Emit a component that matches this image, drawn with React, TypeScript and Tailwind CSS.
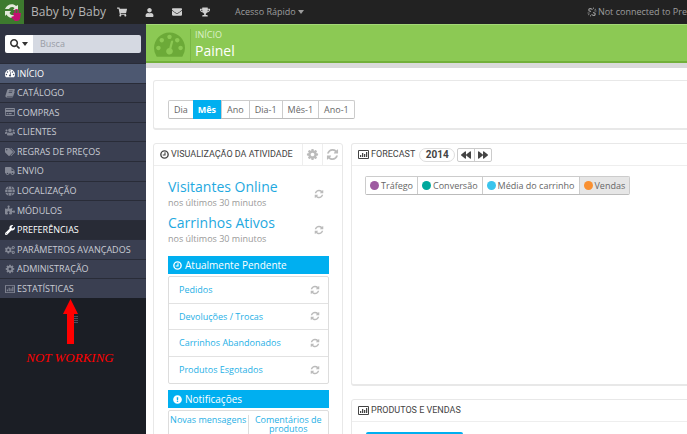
import React from 'react';
import {
  FaBackward,
  FaCogs,
  FaEnvelope,
  FaExclamationCircle,
  FaForward,
  FaGlobe,
  FaPuzzlePiece,
  FaRegCreditCard,
  FaSearch,
  FaShoppingCart,
  FaTags,
  FaTrophy,
  FaTruck,
  FaUser,
  FaUsers,
  FaWrench,
} from 'react-icons/fa';

type IconProps = { className?: string };

function GaugeIcon({ className }: IconProps) {
  return (
    <svg viewBox="0 0 1792 1792" fill="currentColor" className={className} aria-hidden="true">
      <path d="M384 1152q0-53-37.5-90.5t-90.5-37.5-90.5 37.5-37.5 90.5 37.5 90.5 90.5 37.5 90.5-37.5 37.5-90.5zm192-448q0-53-37.5-90.5t-90.5-37.5-90.5 37.5-37.5 90.5 37.5 90.5 90.5 37.5 90.5-37.5 37.5-90.5zm428 481l101-382q6-26-7.5-48.5t-38.5-29.5-48 6.5-30 39.5l-101 382q-60 5-107 43.5t-63 98.5q-20 77 20 146t117 89 146-20 89-117q16-60-6-117t-72-91zm660-33q0-53-37.5-90.5t-90.5-37.5-90.5 37.5-37.5 90.5 37.5 90.5 90.5 37.5 90.5-37.5 37.5-90.5zm-640-640q0-53-37.5-90.5t-90.5-37.5-90.5 37.5-37.5 90.5 37.5 90.5 90.5 37.5 90.5-37.5 37.5-90.5zm448 192q0-53-37.5-90.5t-90.5-37.5-90.5 37.5-37.5 90.5 37.5 90.5 90.5 37.5 90.5-37.5 37.5-90.5zm320 448q0 261-141 483-19 29-54 29h-1402q-35 0-54-29-141-221-141-483 0-182 71-348t191-286 286-191 348-71 348 71 286 191 191 286 71 348z" />
    </svg>
  );
}

function RefreshIcon({ className }: IconProps) {
  return (
    <svg viewBox="0 0 1792 1792" fill="currentColor" className={className} aria-hidden="true">
      <path d="M1639 1056q0 5-1 7-64 268-268 434.5t-478 166.5q-146 0-282.5-55t-243.5-157l-129 129q-19 19-45 19t-45-19-19-45v-448q0-26 19-45t45-19h448q26 0 45 19t19 45-19 45l-137 137q71 66 161 102t187 36q134 0 250-65t186-179q11-17 53-117 8-23 30-23h192q13 0 22.5 9.5t9.5 22.5zm25-800v448q0 26-19 45t-45 19h-448q-26 0-45-19t-19-45 19-45l138-138q-148-137-349-137-134 0-250 65t-186 179q-11 17-53 117-8 23-30 23h-199q-13 0-22.5-9.5t-9.5-22.5v-7q65-268 270-434.5t480-166.5q146 0 284 55.5t245 156.5l130-129q19-19 45-19t45 19 19 45z" />
    </svg>
  );
}

function GearIcon({ className }: IconProps) {
  return (
    <svg viewBox="0 0 1792 1792" fill="currentColor" className={className} aria-hidden="true">
      <path d="M1152 896q0-106-75-181t-181-75-181 75-75 181 75 181 181 75 181-75 75-181zm512-109v222q0 12-8 23t-20 13l-185 28q-19 54-39 91 35 50 107 138 10 12 10 25t-9 23q-27 37-99 108t-94 71q-12 0-26-9l-138-108q-44 23-91 38-16 136-29 186-7 28-36 28h-222q-14 0-24.5-8.5t-11.5-21.5l-28-184q-49-16-90-37l-141 107q-10 9-25 9-14 0-25-11-126-114-165-168-7-10-7-23 0-12 8-23 15-21 51-66.5t54-70.5q-27-50-41-99l-183-27q-13-2-21-12.5t-8-23.5v-222q0-12 8-23t19-13l186-28q14-46 39-92-40-57-107-138-10-12-10-24 0-10 9-23 26-36 98.5-107.5t94.5-71.5q13 0 26 10l138 107q44-23 91-38 16-136 29-186 7-28 36-28h222q14 0 24.5 8.5t11.5 21.5l28 184q49 16 90 37l142-107q9-9 24-9 13 0 25 10 129 119 165 170 7 8 7 22 0 12-8 23-15 21-51 66.5t-54 70.5q26 50 41 98l183 28q13 2 21 12.5t8 23.5z" />
    </svg>
  );
}

function ChartIcon({ className }: IconProps) {
  return (
    <svg viewBox="0 0 22 18" fill="currentColor" className={className} aria-hidden="true">
      <path fillRule="evenodd" d="M2 0h18a2 2 0 0 1 2 2v14a2 2 0 0 1-2 2H2a2 2 0 0 1-2-2V2a2 2 0 0 1 2-2zm0 2v14h18V2z" />
      <path d="M4 10h2.500v4H4zM8 6h2.500v8H8zM12 8h2.500v6H12zM16 4h2.500v10H16z" />
    </svg>
  );
}

function ClockIcon({ className }: IconProps) {
  return (
    <svg viewBox="0 0 18 18" fill="none" stroke="currentColor" className={className} aria-hidden="true">
      <circle cx="9" cy="9" r="7.300" strokeWidth="2.800" />
      <path d="M10 4.500V10H5.500" strokeWidth="2.200" />
    </svg>
  );
}

function BookIcon({ className }: IconProps) {
  return (
    <svg viewBox="0 0 20 20" fill="currentColor" className={className} aria-hidden="true">
      <path fillRule="evenodd" d="M7 2h11a1.500 1.500 0 0 1 1.500 2L16 15a2 2 0 0 1-2 1.500H4.500c-1 0-1 1 0 1H15l3.500-10 .9.500L16 17.500a2 2 0 0 1-2 1.500H4a3 3 0 0 1-3-4L4.500 4A3 3 0 0 1 7 2zm1.500 3L8 6.500h7l.5-1.500zM7.500 8 7 9.500h7l.5-1.500z" />
    </svg>
  );
}

function CaretIcon({ className }: IconProps) {
  return (
    <svg viewBox="0 0 6 4" fill="currentColor" className={className} aria-hidden="true">
      <path d="M0 0h6L3 4z" />
    </svg>
  );
}

function UnlinkIcon({ className }: IconProps) {
  return (
    <svg viewBox="0 0 20 20" fill="none" stroke="currentColor" strokeWidth="2.200" className={className} aria-hidden="true">
      <path d="M8 9 4 7.500A3 3 0 0 1 7 3l4 2M12 11l4 1.500A3 3 0 0 1 13 17l-4-2" />
      <path d="M13 1v3M15 6l3-2M15 8h4M7 19v-3M5 14l-3 2M5 12H1" strokeWidth="1.500" />
    </svg>
  );
}

function Logo() {
  return (
    <svg viewBox="0 0 24 24" className="h-6 w-6 shrink-0 bg-[#3d7a2e]" aria-hidden="true">
      <path d="M5 9c2-5 8-6 11-3l2-1v5h-5l1.500-2c-2-2-4.500-1-5.500 1z" fill="#e3eadb" />
      <path d="M5 11h6l-1.500 2c1 2 3 2.500 5 2l1 2.500c-4 1.500-7.500 0-9-3L5 16z" fill="#e3eadb" />
      <path d="M13 13h8l-1 6q-1 2-3 2h-2l-4-4 3-1z" fill="#c40f72" />
      <path d="M15 13v-2a1.500 1.500 0 0 1 3 0v2" fill="none" stroke="#c40f72" strokeWidth="1.200" />
    </svg>
  );
}

const menu = [
  { label: 'INÍCIO', icon: GaugeIcon, state: 'current' },
  { label: 'CATÁLOGO', icon: BookIcon },
  { label: 'COMPRAS', icon: FaRegCreditCard },
  { label: 'CLIENTES', icon: FaUsers },
  { label: 'REGRAS DE PREÇOS', icon: FaTags },
  { label: 'ENVIO', icon: FaTruck },
  { label: 'LOCALIZAÇÃO', icon: FaGlobe },
  { label: 'MÓDULOS', icon: FaPuzzlePiece },
  { label: 'PREFERÊNCIAS', icon: FaWrench, state: 'hover' },
  { label: 'PARÂMETROS AVANÇADOS', icon: FaCogs },
  { label: 'ADMINISTRAÇÃO', icon: GearIcon },
  { label: 'ESTATÍSTICAS', icon: ChartIcon },
];

const periods = ['Dia', 'Mês', 'Ano', 'Dia-1', 'Mês-1', 'Ano-1'];

const pending = ['Pedidos', 'Devoluções / Trocas', 'Carrinhos Abandonados', 'Produtos Esgotados'];

const series = [
  { label: 'Tráfego', dot: 'bg-[#9e5ba1]' },
  { label: 'Conversão', dot: 'bg-[#00a89c]' },
  { label: 'Média do carrinho', dot: 'bg-[#3ac4ed]' },
  { label: 'Vendas', dot: 'bg-[#f99031]', active: true },
];

function menuStyle(state?: string) {
  if (state === 'current') return 'bg-[#4d5871] text-white';
  if (state === 'hover') return 'bg-[#282b36] text-white';
  return 'bg-[#3a3f51] text-[#c9ccd4]';
}

function TopBar() {
  return (
    <header className="flex h-6 shrink-0 items-center overflow-hidden bg-[#222] text-[#9d9d9d]">
      <Logo />
      <a href="#" className="ml-[7px] w-[79px] whitespace-nowrap text-[12px] leading-6 text-[#b5b5b5]">
        Baby by Baby
      </a>
      <nav className="flex items-center gap-[18px] pl-[7px] text-[#d0d0d0]">
        <a href="#" aria-label="Pedidos"><FaShoppingCart className="size-[10px]" /></a>
        <a href="#" aria-label="Clientes"><FaUser className="size-[9px]" /></a>
        <a href="#" aria-label="Mensagens"><FaEnvelope className="size-[10px]" /></a>
        <a href="#" aria-label="Troféus"><FaTrophy className="size-[10px]" /></a>
      </nav>
      <button className="ml-[25px] flex items-center gap-[2px] whitespace-nowrap text-[9px]">
        Acesso Rápido
        <CaretIcon className="h-1 w-[6px]" />
      </button>
      <a href="#" className="ml-auto flex shrink-0 items-center gap-px whitespace-nowrap text-[9px]">
        <UnlinkIcon className="size-[10px] shrink-0" />
        Not connected to Pre
      </a>
    </header>
  );
}

function Sidebar() {
  return (
    <aside className="relative w-[146px] shrink-0 bg-[#1b1e25]">
      <form className="flex h-[39px] items-center bg-[#2f3342] px-[5px]">
        <button type="button" aria-label="Filtro" className="flex h-[18px] w-7 items-center justify-center gap-[2px] rounded-l-[2px] bg-white text-[#333]">
          <FaSearch className="size-[10px]" />
          <CaretIcon className="h-1 w-[6px]" />
        </button>
        <input
          type="text"
          aria-label="Busca"
          placeholder="Busca"
          className="h-[18px] min-w-0 flex-1 rounded-r-[2px] bg-[#d5d9e2] px-[7px] text-[9px] placeholder:text-[#999da6]"
        />
      </form>
      <ul className="grid h-[235px] auto-rows-fr">
        {menu.map(({ label, icon: Icon, state }) => (
          <li key={label}>
            <a
              href="#"
              className={`flex h-full items-center gap-[2px] border-t border-[#292c38] pl-[5px] text-[9px] font-medium whitespace-nowrap ${menuStyle(state)}`}
            >
              <Icon className={state ? 'size-[10px] shrink-0' : 'size-[10px] shrink-0 text-[#858996]'} />
              {label}
            </a>
          </li>
        ))}
      </ul>
      <div className="mt-[18px] ml-[73px] grid w-[5px] gap-px" aria-hidden="true">
        <i className="h-px bg-[#4b505e]" />
        <i className="h-px bg-[#4b505e]" />
        <i className="h-px bg-[#4b505e]" />
        <i className="h-px bg-[#4b505e]" />
      </div>

      {/* red note on top of the sidebar */}
      <div className="absolute top-[275px] left-[26px] flex w-[88px] flex-col items-center text-[#f00]">
        <svg viewBox="0 0 15 45" className="h-[45px] w-[15px]" fill="currentColor" aria-hidden="true">
          <path d="M7.500 0 15 15h-4v30H4V15H0z" />
        </svg>
        <span className="mt-[6px] font-['Liberation_Serif',serif] text-[13px] leading-4 whitespace-nowrap italic">
          NOT WORKING
        </span>
      </div>
    </aside>
  );
}

function PageHead() {
  return (
    <div className="border-b-[5px] border-[#dadada]">
      <div className="flex h-[39px] items-end border-t border-b-2 border-t-[#a5d878] border-b-[#72b03a] bg-[#8cc954] pl-2 text-white">
        <GaugeIcon className="size-[31px] self-center text-[#6caa38]" />
        <div className="ml-[5px] border-l border-[#79b745] pl-1">
          <p className="text-[9px] leading-[12px] text-[#dcf0c8]">INÍCIO</p>
          <h1 className="text-[14px] leading-[20px]">Painel</h1>
        </div>
      </div>
    </div>
  );
}

const panel = 'rounded-[3px] border border-[#e8e8e8] bg-white';
const heading = "flex items-center gap-[2px] whitespace-nowrap font-['Roboto',sans-serif] text-[9px] text-[#444]";
const bar = 'flex h-[18px] items-center gap-[3px] bg-[#00aff0] pl-[5px] text-[10px] font-medium text-white';

function ActivityPanel() {
  return (
    <section className={`w-[190px] shrink-0 ${panel}`}>
      <div className="flex h-[22px] border-b border-[#eee] pl-[6px]">
        <h2 className={heading}>
          <ClockIcon className="size-[9px]" />
          VISUALIZAÇÃO DA ATIVIDADE
        </h2>
        <div className="ml-auto flex text-[#bbb]">
          <button aria-label="Configurar" className="flex w-5 items-center justify-center border-l border-[#eee]">
            <GearIcon className="size-[13px]" />
          </button>
          <button aria-label="Atualizar" className="flex w-5 items-center justify-center border-l border-[#eee]">
            <RefreshIcon className="size-[13px]" />
          </button>
        </div>
      </div>

      <div className="pt-[10px] pr-[13px] pl-[14px]">
        {['Visitantes Online', 'Carrinhos Ativos'].map((title) => (
          <div key={title} className="flex h-9 items-center justify-between pr-[5px]">
            <div>
              <a href="#" className="block text-[14px] leading-[18px] text-[#1fa9e0]">{title}</a>
              <p className="text-[9px] leading-[14px] text-[#999]">nos últimos 30 minutos</p>
            </div>
            <RefreshIcon className="size-[10px] text-[#bbb]" />
          </div>
        ))}

        <h3 className={`mt-2 ${bar}`}>
          <ClockIcon className="size-[9px]" />
          Atualmente Pendente
        </h3>
        <ul className="mt-[2px] grid h-[108px] auto-rows-fr rounded-[2px] border border-[#ddd]">
          {pending.map((label) => (
            <li key={label} className="flex items-center justify-between border-b border-[#e2e2e2] pr-2 pl-[10px] text-[9px] last:border-b-0">
              <a href="#" className="text-[#1fb0e6]">{label}</a>
              <RefreshIcon className="size-[10px] text-[#bbb]" />
            </li>
          ))}
        </ul>

        <h3 className={`mt-[6px] ${bar}`}>
          <FaExclamationCircle className="size-[9px]" />
          Notificações
        </h3>
        <div className="mt-[2px] grid grid-cols-2 rounded-[2px] border border-[#ddd] pt-1 text-center text-[9px] leading-[9px] text-[#1fb0e6]">
          <a href="#" className="h-10 border-r border-[#ddd] whitespace-nowrap">Novas mensagens</a>
          <a href="#" className="h-10">Comentários de produtos</a>
        </div>
      </div>
    </section>
  );
}

function ForecastPanel() {
  return (
    <section className={`h-[243px] border-b-2 ${panel}`}>
      <div className="flex h-[22px] items-center border-b border-[#eee] pl-[6px]">
        <h2 className={heading}>
          <ChartIcon className="h-[9px] w-[11px]" />
          FORECAST
        </h2>
        <span className="ml-1 flex h-[14px] w-9 items-center justify-center rounded-full border border-[#ddd] font-['Roboto',sans-serif] text-[10px] font-bold text-[#444]">
          2014
        </span>
        <div className="ml-[2px] flex rounded-[2px] border border-[#ccc] text-[#444]">
          <button aria-label="Ano anterior" className="flex h-3 w-[17px] items-center justify-center border-r border-[#ccc]">
            <FaBackward className="size-[10px]" />
          </button>
          <button aria-label="Próximo ano" className="flex h-3 w-4 items-center justify-center">
            <FaForward className="size-[10px]" />
          </button>
        </div>
      </div>
      <div className="mt-[10px] ml-[13px] inline-flex h-[19px] rounded-[2px] border border-[#ccc] border-b-[#bbb] text-[9px] text-[#666]">
        {series.map((s) => (
          <button
            key={s.label}
            className={`flex items-center gap-[2px] border-l border-[#ccc] px-1 whitespace-nowrap first:border-l-0 ${s.active ? 'bg-[#e6e6e6]' : 'bg-white'}`}
          >
            <span className={`size-[9px] rounded-full ${s.dot}`} />
            {s.label}
          </button>
        ))}
      </div>
    </section>
  );
}

export default function App() {
  return (
    <div className="flex h-screen flex-col overflow-hidden bg-white font-['Open_Sans',sans-serif]">
      <TopBar />
      <div className="flex min-h-0 flex-1">
        <Sidebar />
        <main className="min-w-0 flex-1 overflow-hidden">
          <PageHead />
          <div className="pt-3 pl-[7px]">
            <div className={`-mr-1 h-[50px] border-b-2 px-[14px] pt-[14px] ${panel}`}>
              <div className="inline-flex h-[19px] rounded-[2px] border border-[#ccc] border-b-[#bbb] text-[9px] text-[#666]">
                {periods.map((p) => (
                  <button
                    key={p}
                    className={p === 'Mês'
                      ? '-my-px bg-[#00aff0] px-[5px] font-bold text-white'
                      : 'border-l border-[#ccc] px-[5px] first:border-l-0'}
                  >
                    {p}
                  </button>
                ))}
              </div>
            </div>
            <div className="mt-[13px] flex gap-2">
              <ActivityPanel />
              <div className="-mr-1 flex min-w-0 flex-1 flex-col gap-[13px]">
                <ForecastPanel />
                <section className={panel}>
                  <div className="flex h-[22px] items-center border-b border-[#eee] pl-[6px]">
                    <h2 className={heading}>
                      <ChartIcon className="h-[9px] w-[11px]" />
                      PRODUTOS E VENDAS
                    </h2>
                  </div>
                  <div className="mt-[10px] ml-[14px] h-[19px] w-[97px] rounded-t-[2px] bg-[#00aff0]" />
                </section>
              </div>
            </div>
          </div>
        </main>
      </div>
    </div>
  );
}
